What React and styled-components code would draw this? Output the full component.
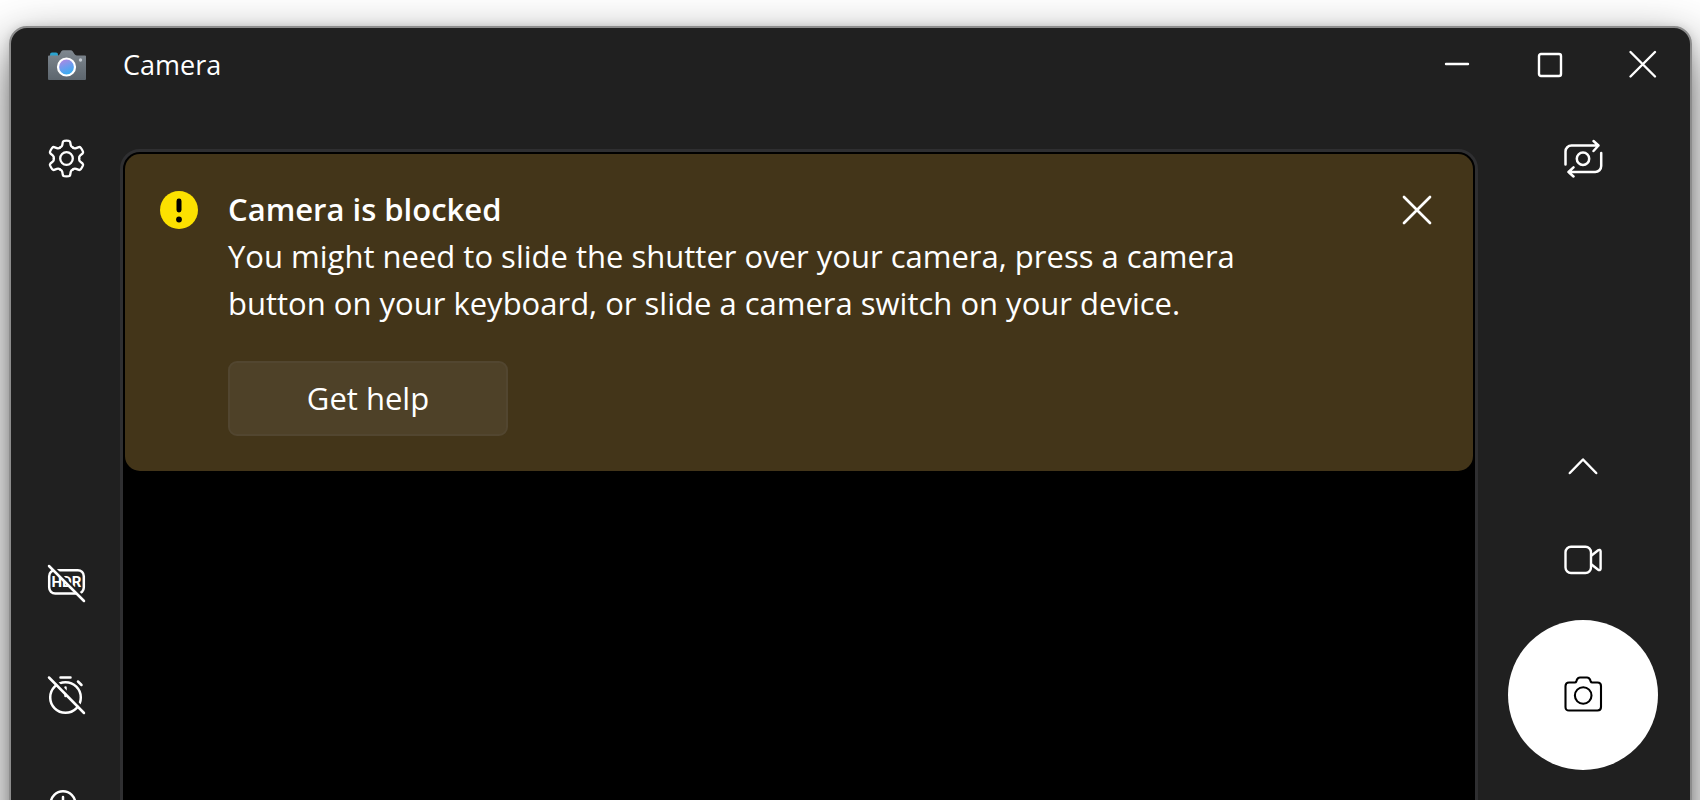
import React from "react";
import styled, { createGlobalStyle } from "styled-components";

const GlobalStyle = createGlobalStyle`
  *,
  *::before,
  *::after {
    box-sizing: border-box;
  }

  body {
    margin: 0;
    background: #fff;
    color: #fff;
    font-family: "Open Sans", "Noto Sans", sans-serif;
  }

  button {
    font: inherit;
    color: inherit;
    cursor: pointer;
  }
`;

const Desktop = styled.div`
  height: 100vh;
  padding: 26px 8px 0 9px;
  overflow: hidden;
`;

const AppWindow = styled.div`
  display: flex;
  flex-direction: column;
  min-height: 110vh;
  border: 2px solid #8c8c8c;
  border-radius: 18px;
  background: #202020;
  box-shadow: 0 20px 50px rgba(0, 0, 0, 0.62), 0 0 8px rgba(0, 0, 0, 0.12);
`;

const TitleBar = styled.header`
  display: flex;
  align-items: center;
  height: 74px;
  padding-right: 1px;
`;

const AppLogo = styled.div`
  display: flex;
  justify-content: center;
  width: 112px;
`;

const AppTitle = styled.h1`
  flex: 1;
  margin: 0;
  padding-bottom: 2px;
  font-size: 27px;
  font-weight: 400;
`;

const PlainButton = styled.button`
  display: flex;
  align-items: center;
  justify-content: center;
  padding: 0;
  border: none;
  background: none;

  svg {
    display: block;
  }
`;

const CaptionButton = styled(PlainButton)`
  width: 93px;
  height: 74px;
`;

const ToolButton = styled(PlainButton)`
  width: 56px;
  height: 56px;
`;

const CaptureButton = styled(PlainButton)`
  width: 150px;
  height: 150px;
  border-radius: 50%;
  background: #fff;
  color: #000;
`;

const Content = styled.div`
  display: grid;
  grid-template-columns: 109px 1fr 212px;
  flex: 1;
`;

const Rail = styled.nav`
  display: flex;
  flex-direction: column;
  align-items: center;
  padding: ${(props) => (props.$right ? "28px 2px 0 0" : "28px 0 0 1px")};
`;

const ToolGroup = styled.div`
  display: flex;
  flex-direction: column;
  align-items: center;
  gap: ${(props) => props.$gap}px;
  margin-top: ${(props) => props.$space}px;
`;

const Preview = styled.main`
  margin-top: 47px;
  padding: 2px;
  border: 3px solid #2f2f31;
  border-radius: 20px 20px 0 0;
  background: #000;
`;

const Banner = styled.section`
  display: flex;
  align-items: flex-start;
  padding: 32px 28px 35px 35px;
  border-radius: 15px;
  background: #433519;

  .badge {
    display: flex;
    align-items: center;
    height: 47px;
    margin-right: 30px;
  }

  .message {
    flex: 1;
    font-size: 31px;
    line-height: 47px;
  }

  .message h2 {
    margin: 0;
    font-size: inherit;
    font-weight: 600;
  }

  .message p {
    max-width: 1030px;
    margin: 0 0 34px;
  }
`;

const DismissButton = styled(PlainButton)`
  width: 56px;
  height: 47px;
`;

const HelpButton = styled.button`
  width: 280px;
  height: 75px;
  padding: 0;
  border: 2px solid #524630;
  border-radius: 9px;
  background: #4e4128;
`;

function Icon({ size = 40, width = 2.5, children }) {
  return (
    <svg
      width={size}
      height={size}
      viewBox={`0 0 ${size} ${size}`}
      fill="none"
      stroke="currentColor"
      strokeWidth={width}
      strokeLinecap="round"
      strokeLinejoin="round"
      aria-hidden="true"
    >
      {children}
    </svg>
  );
}

function LogoIcon() {
  return (
    <svg width="38" height="32" viewBox="0 0 38 32" aria-hidden="true">
      <defs>
        <linearGradient id="logo-body" x1="0" y1="0" x2="0" y2="1">
          <stop offset="0" stopColor="#7f8890" />
          <stop offset="1" stopColor="#5d666e" />
        </linearGradient>
        <linearGradient id="logo-lens" x1="0.2" y1="0" x2="0.6" y2="1">
          <stop offset="0" stopColor="#b884e0" />
          <stop offset="0.5" stopColor="#6f9bee" />
          <stop offset="1" stopColor="#2fb0f0" />
        </linearGradient>
      </defs>
      <path d="M2 7V5.500q0-2 2-2h4q2 0 2 2V7z" fill="#2ba3cf" />
      <path
        d="M1 6.500h8.500q1.500 0 2.300-1.500L13.200 2.500Q14 1.300 15.500 1.300h7q1.500 0 2.300 1.200l1.600 2.600Q27.200 6.500 28.700 6.500H37q1 0 1 1v22.500q0 1-1 1H1q-1 0-1-1V7.500q0-1 1-1z"
        fill="url(#logo-body)"
      />
      <circle cx="18.500" cy="18" r="8.500" fill="url(#logo-lens)" stroke="#fff" strokeWidth="2.200" />
      <circle cx="32.500" cy="11" r="1.700" fill="#c5ccd3" />
    </svg>
  );
}

function GearIcon() {
  const tooth =
    "M-6.350-11Q-4.500-11.700-4.200-13.500L-3.700-16.400Q-3.400-17.500-2.300-17.700Q0-18 2.300-17.700Q3.400-17.500 3.700-16.400L4.200-13.500Q4.500-11.700 6.350-11";
  return (
    <Icon width={2.3}>
      <g transform="translate(20.5 20.5)">
        {[0, 60, 120, 180, 240, 300].map((angle) => (
          <path key={angle} d={tooth} transform={`rotate(${angle})`} />
        ))}
        <circle r="6.300" />
      </g>
    </Icon>
  );
}

function HdrOffIcon() {
  return (
    <Icon>
      <rect x="3.200" y="7.200" width="34.600" height="23.400" rx="6" />
      <text
        x="20.500"
        y="24"
        textAnchor="middle"
        fontFamily="Roboto, sans-serif"
        fontSize="15"
        fontWeight="700"
        fill="currentColor"
        stroke="none"
      >
        HDR
      </text>
      <path d="M5 2l35 35" stroke="#202020" strokeWidth="2.500" strokeLinecap="butt" />
      <path d="M3 3l35 35" />
    </Icon>
  );
}

function TimerOffIcon() {
  return (
    <Icon>
      <circle cx="19.500" cy="22.500" r="15.300" />
      <path d="M14.500 2.500h10M32 6.500l3.500 3.500M19.500 12.500v8.500" />
      <path d="M5 1.500l35 35" stroke="#202020" strokeWidth="2.500" strokeLinecap="butt" />
      <path d="M3 2.500l35 35.500" />
    </Icon>
  );
}

function ProModeIcon() {
  return (
    <Icon>
      <circle cx="17" cy="16.500" r="12.300" />
      <path d="M17 10v8h5M34 22v14M28 29h10" />
    </Icon>
  );
}

function SwitchCameraIcon() {
  return (
    <Icon>
      <path d="M2.500 26.500V13.500a6 6 0 0 1 6-6h27M30.500 3l5 4.500-5 5.500" />
      <path d="M38.200 15v13a6 6 0 0 1-6 6H5.500M10.500 29.300L5.500 34l5 4.500" />
      <circle cx="20" cy="20.700" r="6.200" />
    </Icon>
  );
}

function ChevronUpIcon() {
  return (
    <Icon>
      <path d="M6.800 27L20 13.500 33.200 27" />
    </Icon>
  );
}

function VideoIcon() {
  return (
    <Icon width={2.4}>
      <rect x="2.500" y="6.800" width="25.500" height="26.200" rx="5.500" />
      <path d="M28.500 15.500l6.700-5.300c1-.7 2.400-.2 2.400 1v17.600c0 1.200-1.400 1.700-2.400 1L28.500 24.500" />
    </Icon>
  );
}

function CameraIcon() {
  return (
    <Icon width={2.1}>
      <path d="M13.300 6.500l.5-1.500q1-2.500 3.200-2.500h7q2.200 0 3.200 2.500l.5 1.500q.4 1 1.500 1H34.500q3.500 0 3.500 3.500v21q0 3.500-3.500 3.500H6q-3.500 0-3.500-3.500V11q0-3.500 3.500-3.500h5.800q1.100 0 1.500-1z" />
      <circle cx="20.200" cy="20.500" r="8.300" />
    </Icon>
  );
}

function WarningIcon() {
  return (
    <svg width="38" height="38" viewBox="0 0 38 38" aria-hidden="true">
      <circle cx="19" cy="19" r="19" fill="#fce100" />
      <rect x="16.500" y="7.500" width="5" height="14" rx="2.400" fill="#000" />
      <circle cx="19" cy="28.500" r="2.900" fill="#000" />
    </svg>
  );
}

function WindowControls() {
  return (
    <>
      <CaptionButton aria-label="Minimize">
        <Icon size={30} width={2.4}>
          <path d="M4 14h22" />
        </Icon>
      </CaptionButton>
      <CaptionButton aria-label="Maximize">
        <Icon size={30} width={2.4}>
          <rect x="4" y="4" width="22" height="22" rx="2" />
        </Icon>
      </CaptionButton>
      <CaptionButton aria-label="Close">
        <Icon size={30} width={2.4}>
          <path d="M2.500 2l24.500 24.500M27 2l-24.500 24.500" />
        </Icon>
      </CaptionButton>
    </>
  );
}

function BlockedBanner() {
  return (
    <Banner role="alert">
      <div className="badge">
        <WarningIcon />
      </div>
      <div className="message">
        <h2>Camera is blocked</h2>
        <p>
          You might need to slide the shutter over your camera, press a camera
          button on your keyboard, or slide a camera switch on your device.
        </p>
        <HelpButton>Get help</HelpButton>
      </div>
      <DismissButton aria-label="Dismiss">
        <Icon size={30} width={2.7}>
          <path d="M2 2l26 26M28 2L2 28" />
        </Icon>
      </DismissButton>
    </Banner>
  );
}

export default function App() {
  return (
    <>
      <GlobalStyle />
      <Desktop>
        <AppWindow>
          <TitleBar>
            <AppLogo>
              <LogoIcon />
            </AppLogo>
            <AppTitle>Camera</AppTitle>
            <WindowControls />
          </TitleBar>
          <Content>
            <Rail aria-label="Settings">
              <ToolButton aria-label="Open settings">
                <GearIcon />
              </ToolButton>
              <ToolGroup $space={369} $gap={56}>
                <ToolButton aria-label="HDR off">
                  <HdrOffIcon />
                </ToolButton>
                <ToolButton aria-label="Timer off">
                  <TimerOffIcon />
                </ToolButton>
                <ToolButton aria-label="Pro mode">
                  <ProModeIcon />
                </ToolButton>
              </ToolGroup>
            </Rail>
            <Preview>
              <BlockedBanner />
            </Preview>
            <Rail $right aria-label="Capture">
              <ToolButton aria-label="Change camera">
                <SwitchCameraIcon />
              </ToolButton>
              <ToolGroup $space={252} $gap={38}>
                <ToolButton aria-label="Previous mode">
                  <ChevronUpIcon />
                </ToolButton>
                <ToolButton aria-label="Switch to video mode">
                  <VideoIcon />
                </ToolButton>
              </ToolGroup>
              <ToolGroup $space={32} $gap={0}>
                <CaptureButton aria-label="Take photo">
                  <CameraIcon />
                </CaptureButton>
              </ToolGroup>
            </Rail>
          </Content>
        </AppWindow>
      </Desktop>
    </>
  );
}
